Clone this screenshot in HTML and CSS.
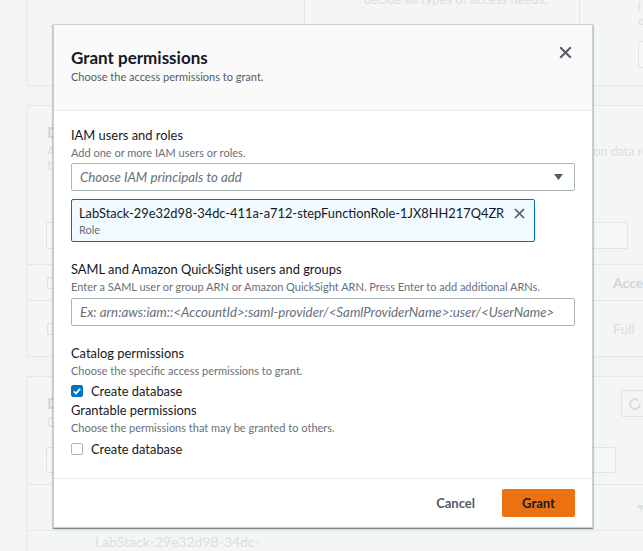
FILE: index.html
```html
<!DOCTYPE html>
<html lang="en">
<head>
<meta charset="utf-8">
<title>Grant permissions</title>
<link rel="stylesheet" href="styles.css">
</head>
<body>
<div class="page" aria-hidden="true">
  <div class="card card-top">
    <div class="col"></div>
    <div class="col col-mid"><p class="bg-text">Grant fine-grained access that can<br>decide all types of access needs.</p></div>
    <div class="col col-right"><p class="bg-text">(<br>o</p><div class="bg-input"></div></div>
  </div>
  <div class="card card-mid">
    <div class="card-head">
      <div class="bg-h">D</div>
      <p class="bg-text">A<span class="gap"></span>on data resources<br>t</p>
    </div>
    <div class="bg-input wide"></div>
    <div class="bg-row head"><span class="bg-box"></span><span class="bg-h small">Access</span></div>
    <div class="bg-row tall"><span class="bg-box"></span><span class="bg-text">Full</span></div>
  </div>
  <div class="card card-low">
    <div class="card-head split">
      <div>
        <div class="bg-h">D</div>
        <p class="bg-text">C</p>
      </div>
      <div class="bg-btn"><svg width="14" height="14" viewBox="0 0 14 14"><path d="M12 7a5 5 0 1 1-1.5-3.6" fill="none" stroke="#d9dcdc" stroke-width="2"/></svg></div>
    </div>
    <div class="bg-input search"></div>
    <div class="bg-row thead"><span></span><span></span><svg width="8" height="6" viewBox="0 0 8 6"><path d="M0 0h8L4 6z" fill="#dfe2e2"/></svg></div>
    <div class="bg-row trow"><span></span><span class="bg-text">LabStack-29e32d98-34dc-</span></div>
  </div>
</div>

<div class="modal" role="dialog" aria-labelledby="grant-title">
  <header class="modal-header">
    <div>
      <h2 class="modal-title" id="grant-title">Grant permissions</h2>
      <p class="modal-subtitle">Choose the access permissions to grant.</p>
    </div>
    <button class="close-btn" aria-label="Close">
      <svg width="13" height="13" viewBox="0 0 13 13"><path d="M1.2 1.2l10.6 10.6M11.8 1.2L1.2 11.8" stroke="#545b64" stroke-width="2" fill="none"/></svg>
    </button>
  </header>

  <div class="modal-body">
    <section class="field">
      <div class="label">IAM users and roles</div>
      <div class="desc">Add one or more IAM users or roles.</div>
      <div class="select">
        <span class="placeholder">Choose IAM principals to add</span>
        <svg width="9" height="6" viewBox="0 0 9 6"><path d="M0 0h9L4.5 6z" fill="#545b64"/></svg>
      </div>
      <div class="token">
        <div>
          <div class="token-name">LabStack-29e32d98-34dc-411a-a712-stepFunctionRole-1JX8HH217Q4ZR</div>
          <div class="token-sub">Role</div>
        </div>
        <svg class="token-x" width="11" height="11" viewBox="0 0 11 11"><path d="M1 1l9 9M10 1L1 10" stroke="#545b64" stroke-width="1.7" fill="none"/></svg>
      </div>
    </section>

    <section class="field">
      <div class="label">SAML and Amazon QuickSight users and groups</div>
      <div class="desc">Enter a SAML user or group ARN or Amazon QuickSight ARN. Press Enter to add additional ARNs.</div>
      <div class="input"><span class="placeholder">Ex: arn:aws:iam::&lt;AccountId&gt;:saml-provider/&lt;SamlProviderName&gt;:user/&lt;UserName&gt;</span></div>
    </section>

    <section class="field">
      <div class="label">Catalog permissions</div>
      <div class="desc">Choose the specific access permissions to grant.</div>
      <label class="check-row"><span class="checkbox checked"><svg width="12" height="12" viewBox="0 0 12 12"><path d="M2.8 6.3l2.2 2.2 4.2-4.8" stroke="#fff" stroke-width="1.8" fill="none"/></svg></span>Create database</label>
      <div class="label">Grantable permissions</div>
      <div class="desc">Choose the permissions that may be granted to others.</div>
      <label class="check-row last"><span class="checkbox"></span>Create database</label>
    </section>
  </div>

  <footer class="modal-footer">
    <button class="btn-link">Cancel</button>
    <button class="btn-primary">Grant</button>
  </footer>
</div>
</body>
</html>
```

FILE: styles.css
```css
* { box-sizing: border-box; margin: 0; padding: 0; }

body {
  width: 643px;
  height: 551px;
  overflow: hidden;
  position: relative;
  background: #f2f3f3;
  font-family: Lato, "Liberation Sans", Arial, sans-serif;
  color: #16191f;
}

/* ---------- dimmed page behind the dialog ---------- */
.page {
  width: 820px;
  padding-left: 27px;
}

.card {
  background: #f4f5f5;
  border: 1px solid #e6e8e8;
}

.card-top {
  margin-top: -41px;
  height: 127px;
  display: grid;
  grid-template-columns: 276px 275px 1fr;
}

.card-top .col + .col { border-left: 1px solid #e6e8e8; }

.col-mid { padding: 12px 0 0 59px; }
.col-mid .bg-text { line-height: 18px; font-size: 13px; }

.col-right { padding: 38px 0 0 58px; }
.col-right .bg-text { line-height: 15px; font-size: 12px; }
.col-right .bg-input { margin-top: 13px; height: 27px; width: 200px; }

.bg-text { color: #dcdfdf; font-size: 12.5px; line-height: 14px; white-space: nowrap; }
.bg-h { color: #d3d6d6; font-weight: 700; font-size: 16px; line-height: 20px; }
.bg-h.small { font-size: 14px; }

.gap { display: inline-block; width: 538px; }

.bg-input {
  border: 1px solid #e1e4e4;
  background: #f6f7f7;
  border-radius: 2px;
}

.card-mid { margin-top: 19px; }
.card-head { padding: 16px 0 0 19px; }
.card-head .bg-text { margin-top: 3px; }
.bg-input.wide { margin: 49px 0 0 18px; height: 27px; width: 582px; }

.bg-row {
  display: grid;
  grid-template-columns: 566px auto;
  align-items: center;
  padding-left: 19px;
  border-top: 1px solid #e6e8e8;
}
.bg-row.head { margin-top: 15px; height: 36px; }
.bg-row.tall { height: 56px; }
.bg-row.tall .bg-text { font-size: 14px; }
.bg-box {
  width: 13px; height: 12px;
  border: 1px solid #dfe2e2;
  border-radius: 2px;
}

.card-low { margin-top: 19px; height: 200px; }
.card-head.split {
  display: grid;
  grid-template-columns: 574px auto;
  align-items: start;
}
.bg-btn {
  margin-top: -3px;
  width: 40px; height: 27px;
  border: 1px solid #e1e4e4;
  border-radius: 2px;
  display: flex; align-items: center; padding-left: 6px;
}
.bg-input.search { margin: 17px 0 0 18px; height: 26px; width: 570px; }
.bg-row.thead { margin-top: 11px; height: 46px; grid-template-columns: 48px 542px auto; }
.bg-row.trow { height: 40px; grid-template-columns: 48px auto; align-items: start; padding-top: 2px; }
.bg-row.trow .bg-text { font-size: 14px; line-height: 18px; }

/* ---------- dialog ---------- */
.modal {
  position: absolute;
  left: 53px;
  top: 24px;
  width: 540px;
  background: #fff;
  border: 1px solid #c9d0d0;
  box-shadow: 0 1px 1px 0 rgba(0, 28, 36, .3), 1px 1px 1px 0 rgba(0, 28, 36, .15), -1px 1px 1px 0 rgba(0, 28, 36, .15);
}

.modal-header {
  display: flex;
  justify-content: space-between;
  align-items: flex-start;
  background: #fafafa;
  border-bottom: 1px solid #eaeded;
  padding: 22px 20px 25px 17px;
}

.modal-title {
  font-size: 17px;
  line-height: 22px;
  font-weight: 700;
  color: #16191f;
}

.modal-subtitle {
  font-size: 11px;
  line-height: 16px;
  color: #545b64;
}

.close-btn {
  border: 0;
  background: none;
  margin-top: -1px;
  width: 13px;
  height: 13px;
  display: flex;
}

.modal-body { padding: 15px 17px 19px; }

.field + .field { margin-top: 18px; }

.label {
  font-size: 12.9px;
  line-height: 18px;
  color: #16191f;
}

.desc {
  margin-top: 1px;
  font-size: 11px;
  line-height: 16px;
  color: #687078;
}

.select, .input {
  margin-top: 2px;
  height: 28px;
  border: 1px solid #aab7b8;
  border-radius: 2px;
  display: flex;
  align-items: center;
  padding: 0 11px 0 8px;
}
.input { margin-top: 3px; }
.select { justify-content: space-between; }

.placeholder {
  font-style: italic;
  font-size: 13.3px;
  color: #687078;
  white-space: nowrap;
}

.token {
  display: flex;
  align-items: flex-start;
  width: fit-content;
  margin-top: 8px;
  padding: 4px 9px 3px 7px;
  border: 1px solid #0073bb;
  border-radius: 2px;
  background: #f1faff;
}
.token-name { font-size: 12.85px; line-height: 18px; color: #16191f; white-space: nowrap; }
.token-sub { font-size: 11px; line-height: 16px; color: #687078; }
.token-x { margin: 4px 0 0 10px; flex: none; }

.check-row {
  display: flex;
  align-items: center;
  gap: 8px;
  height: 21px;
  margin-top: 1px;
  font-size: 12.9px;
  color: #16191f;
}
.check-row.last { margin-top: 2px; }

.checkbox {
  width: 12px;
  height: 12px;
  border: 1px solid #aab7b8;
  border-radius: 2px;
  display: flex;
  flex: none;
}
.checkbox.checked {
  background: #0073bb;
  border-color: #0073bb;
}
.checkbox svg { margin: -1px; }

.modal-footer {
  display: flex;
  justify-content: flex-end;
  align-items: center;
  border-top: 1px solid #eaeded;
  padding: 10px 17px 10px;
}

.btn-link, .btn-primary {
  font-family: inherit;
  font-size: 13px;
  font-weight: 700;
  border: 0;
  height: 28px;
  border-radius: 2px;
  padding: 0 20px;
}

.btn-link {
  background: none;
  color: #545b64;
  margin-right: 7px;
}

.btn-primary {
  background: #ec7211;
  color: #16191f;
  width: 73px;
}
```
